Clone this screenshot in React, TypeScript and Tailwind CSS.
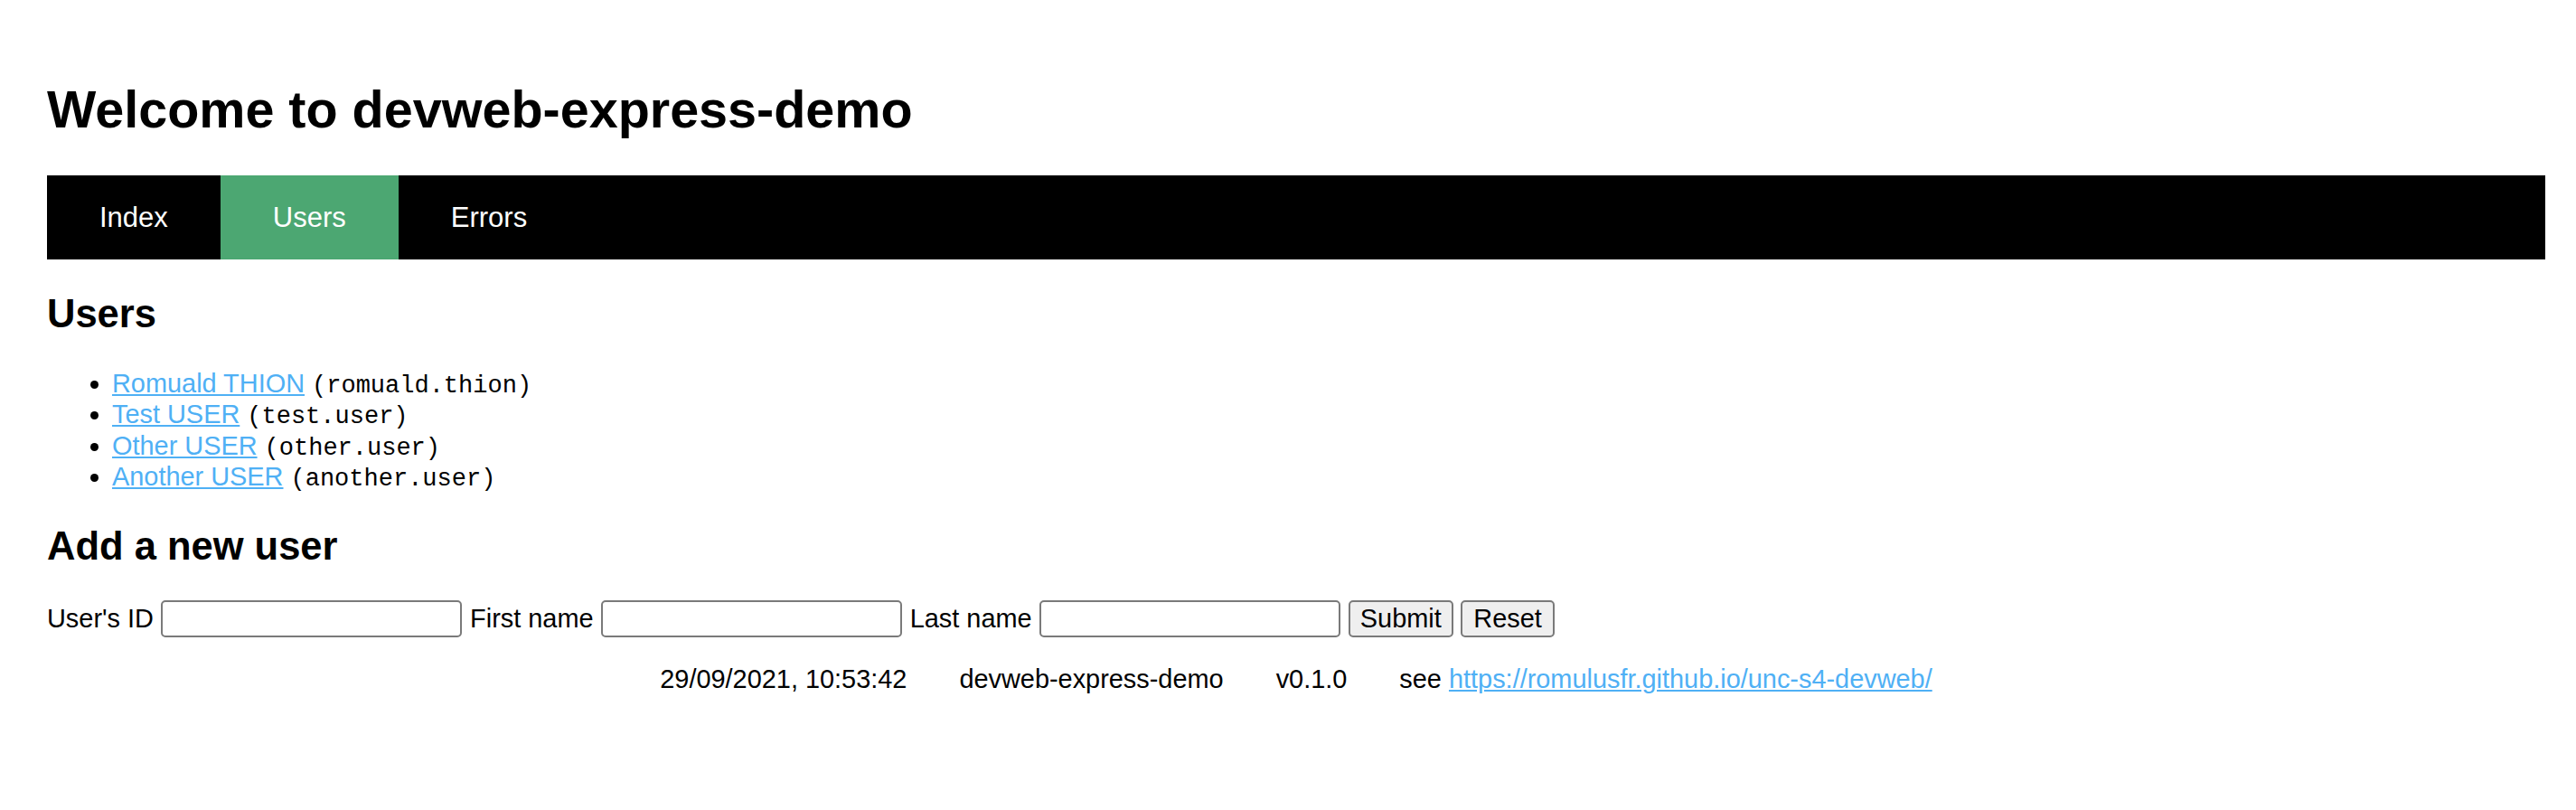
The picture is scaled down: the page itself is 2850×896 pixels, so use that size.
import React from "react";

const users: [string, string][] = [
  ["Romuald THION", "romuald.thion"],
  ["Test USER", "test.user"],
  ["Other USER", "other.user"],
  ["Another USER", "another.user"],
];

export default function App() {
  return (
    <div className="min-h-[896px] bg-white pl-[52px] pr-[34px] pt-[88px] text-black text-[28.9px] leading-[33px] font-['Liberation_Sans',Arial,Helvetica,sans-serif]">
      <h1 className="text-[57.5px] font-bold leading-[67px] mb-[39px]">Welcome to devweb-express-demo</h1>
      <nav className="flex h-[93px] bg-black">
        <a href="#" className="block px-[58px] py-[29px] text-[31px] leading-[35px] text-white">Index</a>
        <a href="#" className="block px-[58px] py-[29px] text-[31px] leading-[35px] text-white bg-[#4ca772]">Users</a>
        <a href="#" className="block px-[58px] py-[29px] text-[31px] leading-[35px] text-white">Errors</a>
      </nav>
      <h2 className="mt-[35px] text-[43.5px] font-bold leading-[50px]">Users</h2>
      <ul className="mt-[35px] list-disc pl-[72px] leading-[34.3px]">
        {users.map(([name, id]) => (
          <li key={id}>
            <a href="#" className="text-[#4fb0f5] underline">{name}</a>{" "}
            <span className="font-['Liberation_Mono','Courier_New',monospace] text-[27px] leading-[20px]">({id})</span>
          </li>
        ))}
      </ul>
      <h2 className="mt-[35px] text-[43.5px] font-bold leading-[50px]">Add a new user</h2>
      <form className="mt-[35px] flex h-[41px] items-center gap-[8.6px]" onSubmit={(e) => e.preventDefault()}>
        <label htmlFor="uid">User's ID</label>
        <input id="uid" type="text" className="h-[41px] w-[333px] rounded-[5px] border-2 border-[#7a7a7a] bg-white px-[4px]" />
        <label htmlFor="fn">First name</label>
        <input id="fn" type="text" className="h-[41px] w-[333px] rounded-[5px] border-2 border-[#7a7a7a] bg-white px-[4px]" />
        <label htmlFor="ln">Last name</label>
        <input id="ln" type="text" className="h-[41px] w-[333px] rounded-[5px] border-2 border-[#7a7a7a] bg-white px-[4px]" />
        <button type="submit" className="h-[41px] rounded-[5px] border-2 border-[#7a7a7a] bg-[#efefef] px-[11px] leading-[33px] text-black">Submit</button>
        <button type="reset" className="h-[41px] rounded-[5px] border-2 border-[#7a7a7a] bg-[#efefef] px-[12px] leading-[33px] text-black">Reset</button>
      </form>
      <footer className="mt-[30px] flex justify-center gap-[58px] leading-[33px]">
        <span>29/09/2021, 10:53:42</span>
        <span>devweb-express-demo</span>
        <span>v0.1.0</span>
        <span>
          see{" "}
          <a href="#" className="text-[#4fb0f5] underline">https://romulusfr.github.io/unc-s4-devweb/</a>
        </span>
      </footer>
    </div>
  );
}
